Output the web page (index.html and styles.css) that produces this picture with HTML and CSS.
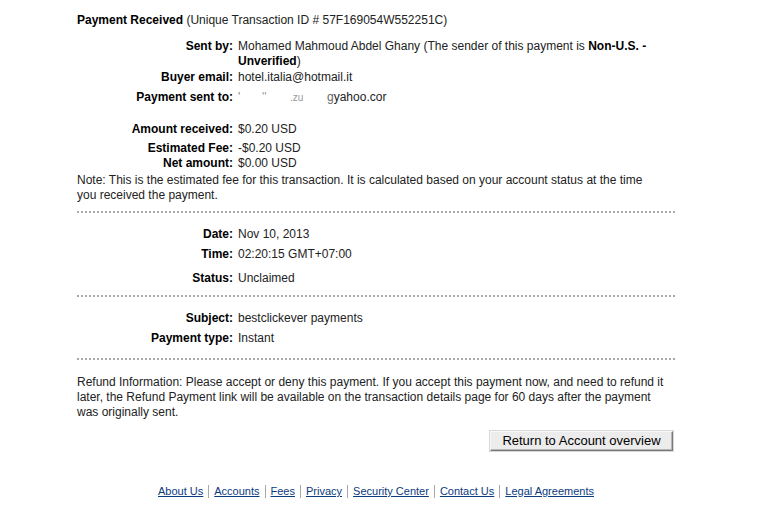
FILE: index.html
```html
<!DOCTYPE html>
<html>
<head>
<meta charset="utf-8">
<link rel="stylesheet" href="styles.css">
</head>
<body>
<div class="page">
  <div class="title"><b>Payment Received</b> (Unique Transaction ID # 57F169054W552251C)</div>

  <div class="row r-sent"><div class="lbl">Sent by:</div><div class="val">Mohamed Mahmoud Abdel Ghany (The sender of this payment is <b>Non-U.S. -</b> <b>Unverified</b>)</div></div>
  <div class="row r-buyer"><div class="lbl">Buyer email:</div><div class="val">hotel.italia@hotmail.it</div></div>
  <div class="row r-to"><div class="lbl">Payment sent to:</div><div class="val masked"><span class="f1">'</span><span class="f2">''</span><span class="f3">.zu</span><span class="f4">g</span>yahoo.cor</div></div>

  <div class="row r-amount"><div class="lbl">Amount received:</div><div class="val">$0.20 USD</div></div>
  <div class="row r-fee"><div class="lbl">Estimated Fee:</div><div class="val">-$0.20 USD</div></div>
  <div class="row r-net"><div class="lbl">Net amount:</div><div class="val">$0.00 USD</div></div>
  <p class="note">Note: This is the estimated fee for this transaction. It is calculated based on your account status at the time you received the payment.</p>

  <div class="dots d1"></div>

  <div class="row r-date"><div class="lbl">Date:</div><div class="val">Nov 10, 2013</div></div>
  <div class="row r-time"><div class="lbl">Time:</div><div class="val">02:20:15 GMT+07:00</div></div>
  <div class="row r-status"><div class="lbl">Status:</div><div class="val">Unclaimed</div></div>

  <div class="dots d2"></div>

  <div class="row r-subject"><div class="lbl">Subject:</div><div class="val">bestclickever payments</div></div>
  <div class="row r-type"><div class="lbl">Payment type:</div><div class="val">Instant</div></div>

  <div class="dots d3"></div>

  <p class="refund">Refund Information: Please accept or deny this payment. If you accept this payment now, and need to refund it later, the Refund Payment link will be available on the transaction details page for 60 days after the payment was originally sent.</p>

  <div class="actions"><button class="btn" type="button">Return to Account overview</button></div>

  <div class="footer">
    <a href="#">About Us</a><span class="sep"></span>
    <a href="#">Accounts</a><span class="sep"></span>
    <a href="#">Fees</a><span class="sep"></span>
    <a href="#">Privacy</a><span class="sep"></span>
    <a href="#">Security Center</a><span class="sep"></span>
    <a href="#">Contact Us</a><span class="sep"></span>
    <a href="#">Legal Agreements</a>
  </div>
</div>
</body>
</html>
```

FILE: styles.css
```css
html, body {
  margin: 0;
  padding: 0;
  background: #ffffff;
}
body {
  font-family: Arial, "Liberation Sans", sans-serif;
  font-size: 12px;
  line-height: 15px;
  color: #000;
}
.page {
  width: 600px;
  padding: 13px 0 0 77px;
}
.title {
  color: #222;
}
.title b {
  color: #000;
}
.row {
  display: flex;
  gap: 5px;
}
.lbl {
  width: 156px;
  flex: none;
  text-align: right;
  font-weight: bold;
}
.val {
  flex: 1;
  color: #222;
}
.val b {
  color: #000;
}
.r-sent { margin-top: 11px; }
.r-buyer { margin-top: 1px; }
.r-to { margin-top: 5px; }
.r-amount { margin-top: 17px; }
.r-fee { margin-top: 4px; }
.r-net { margin-top: 0; }
.note {
  margin: 2px 0 0;
  max-width: 575px;
  color: #222;
}
.masked span { display: inline-block; }
.masked .f1 { width: 24px; color: #888; }
.masked .f2 { width: 28px; color: #999; }
.masked .f3 { width: 37px; color: #999; font-size: 10px; }
.masked .f4 { color: #666; }
.dots {
  height: 2px;
  background-image: linear-gradient(to right, #a8a8a8 50%, transparent 50%);
  background-size: 4px 2px;
  background-repeat: repeat-x;
}
.d1 { margin-top: 8px; }
.r-date { margin-top: 14px; }
.r-time { margin-top: 5px; }
.r-status { margin-top: 9px; }
.d2 { margin-top: 9px; }
.r-subject { margin-top: 14px; }
.r-type { margin-top: 5px; }
.d3 { margin-top: 12px; }
.refund {
  margin: 15px 0 0;
  max-width: 590px;
  color: #222;
}
.actions {
  display: flex;
  justify-content: flex-end;
  padding-right: 4px;
  margin-top: 11px;
}
.btn {
  font-family: Arial, "Liberation Sans", sans-serif;
  font-size: 13px;
  line-height: 16px;
  color: #000;
  background: #ececec;
  border: 1px solid;
  border-color: #f8f8f8 #7a7a7a #7a7a7a #f8f8f8;
  box-shadow: inset -1px -1px 0 #b5b5b5, 0 0 0 1px #d8d8d8;
  padding: 1px 10px 1px 10px;
  width: 183px;
  height: 20px;
  margin: 0;
}
.footer {
  margin-top: 33px;
  display: flex;
  justify-content: center;
  align-items: center;
  font-size: 11px;
  line-height: 14px;
  padding-right: 2px;
}
.footer a {
  color: #0b3a7e;
  text-decoration: underline;
}
.sep {
  width: 1px;
  height: 13px;
  background: #a8a8a8;
  margin: 0 5px;
}
```
